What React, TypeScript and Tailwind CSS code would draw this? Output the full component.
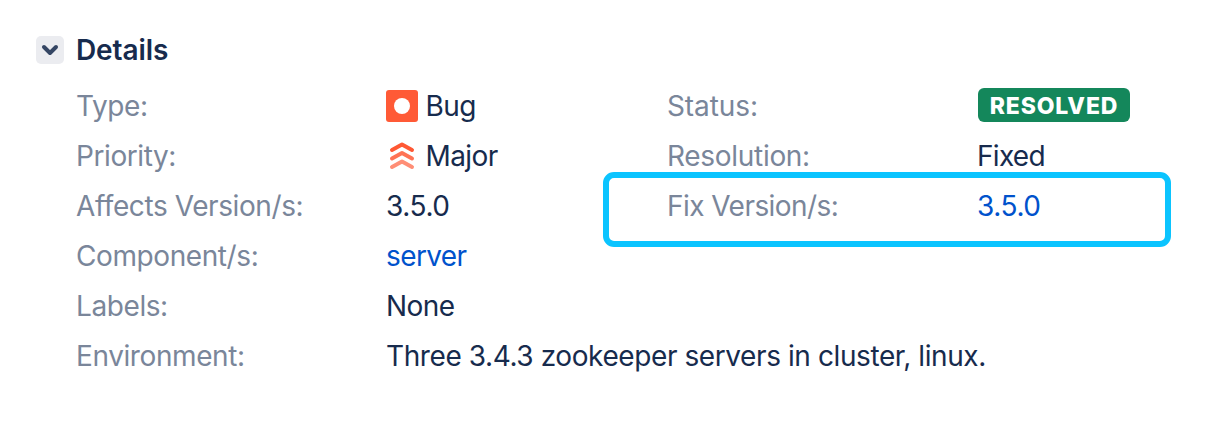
import React from "react";

function Label({ children }: { children: React.ReactNode }) {
  return <dt className="text-[#7a869a]">{children}</dt>;
}

export default function App() {
  return (
    <main className="h-[422px] w-[1218px] bg-white pt-[32px] pl-[36px] font-['Inter',sans-serif] text-[28px] leading-[42px] tracking-[-0.41px] text-[#172b4d]">
      <header className="flex h-9 items-center gap-3">
        <button aria-label="Collapse details" className="flex size-7 items-center justify-center rounded-[5px] bg-[#ebecf0]">
          <svg width="28" height="28" viewBox="0 0 28 28" fill="none" stroke="#344563" strokeWidth="4" strokeLinecap="round" strokeLinejoin="round"><path d="m8 11 6 6 6-6" /></svg>
        </button>
        <h2 className="font-semibold tracking-[-0.1px]">Details</h2>
      </header>
      <div className="flex pl-10">
        <dl className="grid w-[591px] auto-rows-[50px] grid-cols-[310px_281px] items-center pt-[13px] whitespace-nowrap">
          <Label>Type:</Label>
          <dd className="flex items-center gap-2">
            <svg width="32" height="32" viewBox="0 0 32 32"><rect width="32" height="32" rx="3" fill="#ff5a36" /><circle cx="16" cy="16" r="8" fill="#fff" /></svg>
            <span className="-ml-[0.5px] tracking-[-0.6px]">Bug</span>
          </dd>
          <Label>Priority:</Label>
          <dd className="flex items-center gap-2">
            <svg width="32" height="32" viewBox="0 0 32 32" fill="none" strokeWidth="4" strokeLinecap="round" strokeLinejoin="round">
              <path d="m6 10 10-5.500L26 10" stroke="#ff5834" />
              <path d="m6 18.500 10-5.500 10 5.500" stroke="#ff7355" />
              <path d="m6 27 10-5.500L26 27" stroke="#ff8e76" />
            </svg>
            <span className="-ml-[0.5px] tracking-[-0.6px]">Major</span>
          </dd>
          <Label>Affects Version/s:</Label><dd>3.5.0</dd>
          <Label>Component/s:</Label><dd className="tracking-[-0.6px] text-[#0052cc]">server</dd>
          <Label>Labels:</Label><dd className="tracking-[-0.6px]">None</dd>
          <Label>Environment:</Label><dd>Three 3.4.3 zookeeper servers in cluster, linux.</dd>
        </dl>
        <div className="pt-[13px]">
          <dl className="grid auto-rows-[50px] grid-cols-[310px_160px] items-center">
            <dt className="tracking-[-0.1px] text-[#7a869a]">Status:</dt>
            <dd className="pb-[2px] pl-px"><span className="flex h-[34px] w-[152px] items-center justify-center rounded-[6px] bg-[#14875b] pt-[2px] text-[23px] font-extrabold tracking-[0.85px] text-white">RESOLVED</span></dd>
            <dt className="tracking-[-0.3px] text-[#7a869a]">Resolution:</dt><dd className="tracking-[-0.7px]">Fixed</dd>
          </dl>
          <dl className="-mt-[9px] -ml-[64px] grid h-[75px] w-[568px] grid-cols-[310px_1fr] rounded-[11px] border-[6px] border-[#0bc4ff] pt-[7px] pl-[58px]">
            <dt className="tracking-[-0.55px] text-[#7a869a]">Fix Version/s:</dt><dd className="text-[#0052cc]">3.5.0</dd>
          </dl>
        </div>
      </div>
    </main>
  );
}
